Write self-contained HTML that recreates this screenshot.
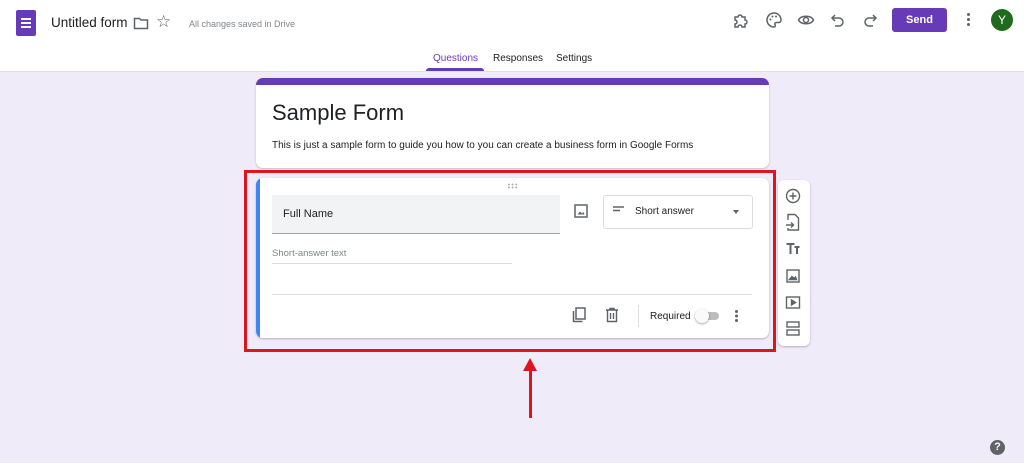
<!DOCTYPE html>
<html><head><style>
body{margin:0;width:1024px;height:463px;background:#f0ebf8;font-family:"Liberation Sans",sans-serif;position:relative;overflow:hidden}
.a{position:absolute}
svg{display:block}
</style></head><body>
<div class="a" style="left:0;top:0;width:1024px;height:71px;background:#fff;border-bottom:1px solid #e0dce8"></div>
<div class="a" style="left:16px;top:10px;width:20px;height:26px;background:#673ab7;border-radius:2px"></div>
<div class="a" style="left:21px;top:18px;width:10px;height:2px;background:#fff;box-shadow:0 4px #fff,0 8px #fff"></div>
<div class="a" style="left:51px;top:15px;font-size:13.5px;color:#202124">Untitled form</div>
<svg class="a" style="left:133px;top:16px" width="16" height="14"><path d="M1.5 2.5h5l1.5 1.5h6.5v8.5h-13z" fill="none" stroke="#5f6368" stroke-width="1.5"/></svg>
<div class="a" style="left:156px;top:12px;font-size:17px;color:#5f6368">☆</div>
<div class="a" style="left:189px;top:19px;font-size:9px;color:#80868b">All changes saved in Drive</div>
<svg class="a" style="left:732px;top:11px" width="18" height="18"><path d="M3 6h3a2 2 0 0 1 4 0h3v3a2 2 0 0 1 0 4v3h-3a2 2 0 0 0-4 0H3v-3a2 2 0 0 0 0-4z" fill="none" stroke="#5f6368" stroke-width="1.5"/></svg>
<svg class="a" style="left:765px;top:11px" width="18" height="18"><path d="M9 2a7 7 0 0 0 0 14c1.5 0 1.5-1.5 1-2.5s0-2 1.5-2H14a2.5 2.5 0 0 0 2-3A7 7 0 0 0 9 2z" fill="none" stroke="#5f6368" stroke-width="1.5"/><circle cx="5.5" cy="8.5" r="1" fill="#5f6368"/><circle cx="7.5" cy="5.5" r="1" fill="#5f6368"/><circle cx="11" cy="5.5" r="1" fill="#5f6368"/></svg>
<svg class="a" style="left:797px;top:11px" width="18" height="18"><path d="M1.5 9C4 4 14 4 16.5 9 14 14 4 14 1.5 9z" fill="none" stroke="#5f6368" stroke-width="1.5"/><circle cx="9" cy="9" r="2.5" fill="none" stroke="#5f6368" stroke-width="1.5"/></svg>
<svg class="a" style="left:829px;top:11px" width="18" height="18"><path d="M6 4L3 7l3 3M3 7h7a4 4 0 0 1 0 8H6" fill="none" stroke="#5f6368" stroke-width="1.5"/></svg>
<svg class="a" style="left:861px;top:11px" width="18" height="18"><path d="M12 4l3 3-3 3M15 7H8a4 4 0 0 0 0 8h4" fill="none" stroke="#5f6368" stroke-width="1.5"/></svg>
<div class="a" style="left:892px;top:8px;width:55px;height:24px;background:#673ab7;border-radius:3px;color:#fff;font-size:11px;font-weight:bold;text-align:center;line-height:24px">Send</div>
<div class="a" style="left:967px;top:13px;width:3px;height:3px;background:#5f6368;border-radius:50%;box-shadow:0 5px #5f6368,0 10px #5f6368"></div>
<div class="a" style="left:991px;top:9px;width:22px;height:22px;background:#1e6b1e;border-radius:50%;color:#fff;font-size:12px;text-align:center;line-height:22px">Y</div>
<div class="a" style="left:433px;top:53px;font-size:10px;color:#673ab7">Questions</div>
<div class="a" style="left:426px;top:68px;width:58px;height:3px;background:#673ab7;border-radius:3px 3px 0 0"></div>
<div class="a" style="left:493px;top:53px;font-size:10px;color:#202124">Responses</div>
<div class="a" style="left:556px;top:53px;font-size:10px;color:#202124">Settings</div>

<div class="a" style="left:256px;top:78px;width:513px;height:90px;background:#fff;border-radius:7px;box-shadow:0 1px 2px rgba(0,0,0,.2);overflow:hidden"><div style="height:7px;background:#673ab7"></div></div>
<div class="a" style="left:272px;top:100px;font-size:22px;color:#202124">Sample Form</div>
<div class="a" style="left:272px;top:140px;font-size:10px;color:#202124">This is just a sample form to guide you how to you can create a business form in Google Forms</div>

<div class="a" style="left:256px;top:178px;width:513px;height:160px;background:#fff;border-radius:7px;box-shadow:0 1px 2px rgba(0,0,0,.25);overflow:hidden"><div style="width:4px;height:100%;background:#4285f4"></div></div>
<div class="a" style="left:507px;top:183px;width:11px;height:6px;background:radial-gradient(circle,#aaa 0.8px,transparent 1px) 0 0/3.7px 3px"></div>
<div class="a" style="left:272px;top:195px;width:288px;height:38px;background:#f1f3f4;border-bottom:1px solid #9aa0a6"></div>
<div class="a" style="left:283px;top:208px;font-size:11px;color:#202124">Full Name</div>
<svg class="a" style="left:574px;top:204px" width="14" height="14"><rect x="1" y="1" width="12" height="12" fill="none" stroke="#5f6368" stroke-width="1.5"/><path d="M3.5 10.5l2.5-3 2 2 1.5-1.5 1 2.5z" fill="#5f6368"/></svg>
<div class="a" style="left:603px;top:195px;width:148px;height:32px;border:1px solid #dadce0;border-radius:3px;background:#fff"></div>
<svg class="a" style="left:613px;top:206px" width="12" height="6"><path d="M0 1h11M0 4.5h7" stroke="#5f6368" stroke-width="1.4"/></svg>
<div class="a" style="left:635px;top:206px;font-size:10px;color:#202124">Short answer</div>
<div class="a" style="left:733px;top:210px;border:3.5px solid transparent;border-top:4px solid #5f6368"></div>
<div class="a" style="left:272px;top:248px;font-size:9.5px;color:#80868b">Short-answer text</div>
<div class="a" style="left:272px;top:263px;width:240px;height:1px;background:#dadce0"></div>
<div class="a" style="left:272px;top:294px;width:480px;height:1px;background:#e0e0e0"></div>
<svg class="a" style="left:572px;top:307px" width="14" height="16"><rect x="4" y="1" width="9" height="11" fill="none" stroke="#5f6368" stroke-width="1.5"/><path d="M1.5 4v10.5h9" fill="none" stroke="#5f6368" stroke-width="1.5"/></svg>
<svg class="a" style="left:605px;top:307px" width="14" height="16"><path d="M1 3h12M5 3V1.5h4V3M2.5 3.5v11h9v-11M5.5 6v6M8.5 6v6" fill="none" stroke="#5f6368" stroke-width="1.4"/></svg>
<div class="a" style="left:638px;top:305px;width:1px;height:22px;background:#e0e0e0"></div>
<div class="a" style="left:650px;top:311px;font-size:10px;color:#202124">Required</div>
<div class="a" style="left:699px;top:312px;width:20px;height:8px;background:#bdbdbd;border-radius:4px"></div>
<div class="a" style="left:695px;top:309px;width:14px;height:14px;background:#fafafa;border-radius:50%;box-shadow:0 1px 2px rgba(0,0,0,.35)"></div>
<div class="a" style="left:735px;top:310px;width:3px;height:3px;background:#5f6368;border-radius:50%;box-shadow:0 4.5px #5f6368,0 9px #5f6368"></div>

<div class="a" style="left:244px;top:170px;width:526px;height:176px;border:3px solid #e0141e"></div>

<div class="a" style="left:778px;top:180px;width:32px;height:166px;background:#fff;border-radius:6px;box-shadow:0 1px 2px rgba(0,0,0,.25)"></div>
<svg class="a" style="left:785px;top:188px" width="16" height="150" fill="none" stroke="#5f6368" stroke-width="1.4">
<circle cx="8" cy="8" r="6.5"/><path d="M8 4.5v7M4.5 8h7"/>
<path d="M3 32v-5.5h7l3.5 3.5v12H3v-2M1 37h7M6 34.5l2.5 2.5-2.5 2.5"/>
<path d="M1.5 56h8M5.5 56v10M9.5 59h5M12 59v7" stroke-width="2"/>
<rect x="2" y="82" width="12" height="12"/><path d="M4.5 91.5l2.5-3 2 2 1.5-1.5 1 2.5z" fill="#5f6368"/>
<rect x="1.5" y="109" width="13" height="11"/><path d="M6.5 112v5l4-2.5z" fill="#5f6368"/>
<rect x="2" y="134" width="12" height="5"/><rect x="2" y="142" width="12" height="5"/>
</svg>

<div class="a" style="left:529px;top:368px;width:3px;height:50px;background:#e0141e"></div>
<div class="a" style="left:523px;top:358px;border:7.5px solid transparent;border-bottom:13px solid #e0141e;border-top:0"></div>

<div class="a" style="left:990px;top:440px;width:15px;height:15px;background:#5f6368;border-radius:50%;color:#fff;font-size:11px;font-weight:bold;text-align:center;line-height:15px">?</div>
</body></html>
